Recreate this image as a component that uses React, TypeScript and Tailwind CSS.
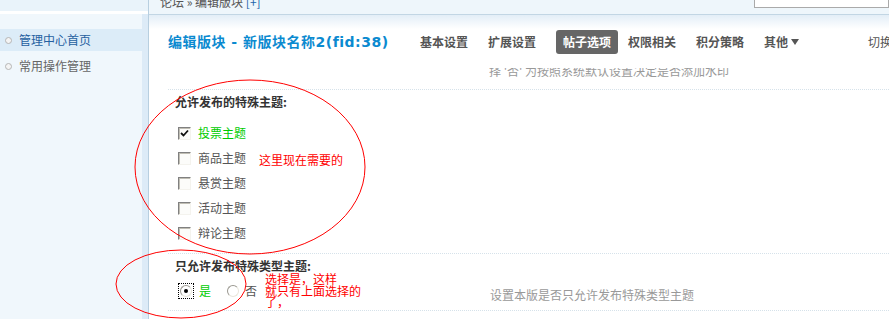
const tabs = ['基本设置', '扩展设置', '帖子选项', '权限相关', '积分策略'];

const threadTypes = [
  { label: '投票主题', checked: true },
  { label: '商品主题', checked: false },
  { label: '悬赏主题', checked: false },
  { label: '活动主题', checked: false },
  { label: '辩论主题', checked: false },
];

function Checkbox({ checked }: { checked: boolean }) {
  return (
    <span className="flex h-[13px] w-[13px] items-center justify-center border border-t-[#808080] border-l-[#808080] border-r-[#f4f3ee] border-b-[#f4f3ee] bg-[#fcfcfa] shadow-[inset_1px_1px_0_#c0beb4]">
      {checked && (
        <svg width="9" height="9" viewBox="0 0 9 9">
          <path d="M1 4 L3.5 6.5 L8 1.5" stroke="#111" strokeWidth="1.8" fill="none" />
        </svg>
      )}
    </span>
  );
}

function Radio({ checked }: { checked: boolean }) {
  return (
    <span className={`flex items-center justify-center ${checked ? 'border border-dotted border-black p-[1px]' : ''}`}>
      <span className="flex h-[12px] w-[12px] items-center justify-center rounded-full border border-t-[#9a9890] border-l-[#9a9890] border-r-[#e8e6dc] border-b-[#e8e6dc] bg-white">
        {checked && <span className="h-[4px] w-[4px] rounded-full bg-black" />}
      </span>
    </span>
  );
}

export default function App() {
  return (
    <div className="relative flex h-[319px] w-[889px] overflow-hidden bg-white font-['SimSun','Noto_Sans_CJK_SC',sans-serif] text-[12px] text-[#555]">
      {/* sidebar */}
      <div className="flex w-[149px] shrink-0 flex-col border-r border-[#b8cfe0]">
        <div className="h-[11px] bg-[#e9f3fa]" />
        <div className="h-[3px] bg-white" />
        <div className="flex flex-1 bg-[#f0f7fc]">
          <div className="flex flex-1 flex-col pt-[15px]">
            <div className="flex h-[22px] items-center gap-[7px] bg-[#dcecf8] pl-[5px] text-[#2560a0]">
              <span className="h-[7px] w-[7px] rounded-full border border-[#b5b5b5] bg-[#f4f4f4]" />
              管理中心首页
            </div>
            <div className="mt-[4px] flex h-[22px] items-center gap-[7px] pl-[5px] text-[#666]">
              <span className="h-[7px] w-[7px] rounded-full border border-[#b5b5b5] bg-[#f4f4f4]" />
              常用操作管理
            </div>
          </div>
          <div className="w-[6px] bg-[#ddebf7]" />
        </div>
      </div>

      {/* main */}
      <div className="flex min-w-0 flex-1 flex-col">
        <div className="flex h-[15px] items-end justify-between border-b border-[#c2d6e4] bg-[#eef6fb] pl-[11px]">
          <div className="mb-[6px] leading-[12px] text-[#555]">
            论坛 » 编辑版块 <span className="text-[#2266aa]">[+]</span>
          </div>
          <div className="mb-[6px] h-[16px] w-[135px] self-end border border-[#aaa] bg-white" />
        </div>
        <div className="h-[14px] bg-gradient-to-b from-[#e3eef7] to-white" />

        <div className="flex h-[26px] items-center whitespace-nowrap pl-[19px]">
          <div className="w-[252px] shrink-0 font-['DejaVu_Sans','Noto_Sans_CJK_SC',sans-serif] text-[14px] font-bold tracking-[0.5px] text-[#0b8ad0]">
            编辑版块 - 新版块名称2(fid:38)
          </div>
          <div className="flex shrink-0 items-center font-bold text-[#555]">
            {tabs.map((t) => (
              <span
                key={t}
                className={
                  t === '帖子选项'
                    ? 'mr-[10px] rounded-[3px] bg-[#666] px-[7px] py-[3px] text-white'
                    : 'mr-[20px]'
                }
              >
                {t}
              </span>
            ))}
            <span className="flex items-center gap-[3px]">
              其他
              <svg width="8" height="6" viewBox="0 0 8 6">
                <path d="M0 0 H8 L4 6 Z" fill="#555" />
              </svg>
            </span>
            <span className="ml-[69px] font-normal">切换</span>
          </div>
        </div>

        <div className="ml-[340px] mt-[13px] h-[11px] overflow-hidden whitespace-nowrap leading-[12px] text-[#999]">
          <div className="mt-[-3px]">择 '否' 为按照系统默认设置决定是否添加水印</div>
        </div>
        <div className="ml-[19px] mt-[10px] border-b border-dotted border-[#d6e2ea]" />

        <div className="ml-[26px] mt-[3px] font-bold text-[#333]">允许发布的特殊主题:</div>
        <div className="ml-[29px] mt-[14px] flex flex-col gap-[9px]">
          {threadTypes.map((t) => (
            <label key={t.label} className="flex h-[16px] items-center gap-[7px]">
              <Checkbox checked={t.checked} />
              <span className={t.checked ? 'text-[#00cc00]' : 'text-[#555]'}>{t.label}</span>
            </label>
          ))}
        </div>
        <div className="ml-[19px] mt-[12px] border-b border-dotted border-[#d6e2ea]" />

        <div className="ml-[26px] mt-[3px] font-bold text-[#333]">只允许发布特殊类型主题:</div>
        <div className="mt-[8px] flex items-start">
          <div className="ml-[29px] flex h-[16px] w-[312px] items-center">
            <Radio checked />
            <span className="ml-[5px] text-[#00cc00]">是</span>
            <span className="ml-[16px]">
              <Radio checked={false} />
            </span>
            <span className="ml-[6px]">否</span>
          </div>
          <div className="mt-[3px] text-[#999]">设置本版是否只允许发布特殊类型主题</div>
        </div>
        <div className="ml-[19px] mt-[6px] border-b border-dotted border-[#d6e2ea]" />
      </div>

      {/* annotations drawn over the screenshot */}
      <svg className="pointer-events-none absolute left-0 top-0" width="889" height="319">
        <ellipse cx="250" cy="167" rx="115" ry="87" fill="none" stroke="#ff0000" strokeWidth="1" />
        <ellipse cx="181" cy="284" rx="65" ry="34" fill="none" stroke="#ff0000" strokeWidth="1" />
      </svg>
      <div className="pointer-events-none absolute left-[259px] top-[151px] text-[#ff0000]">这里现在需要的</div>
      <div className="pointer-events-none absolute left-[265px] top-[273px] leading-[11.5px] text-[#ff0000]">
        选择是，这样
        <br />
        就只有上面选择的
        <br />
        了，
      </div>
    </div>
  );
}
